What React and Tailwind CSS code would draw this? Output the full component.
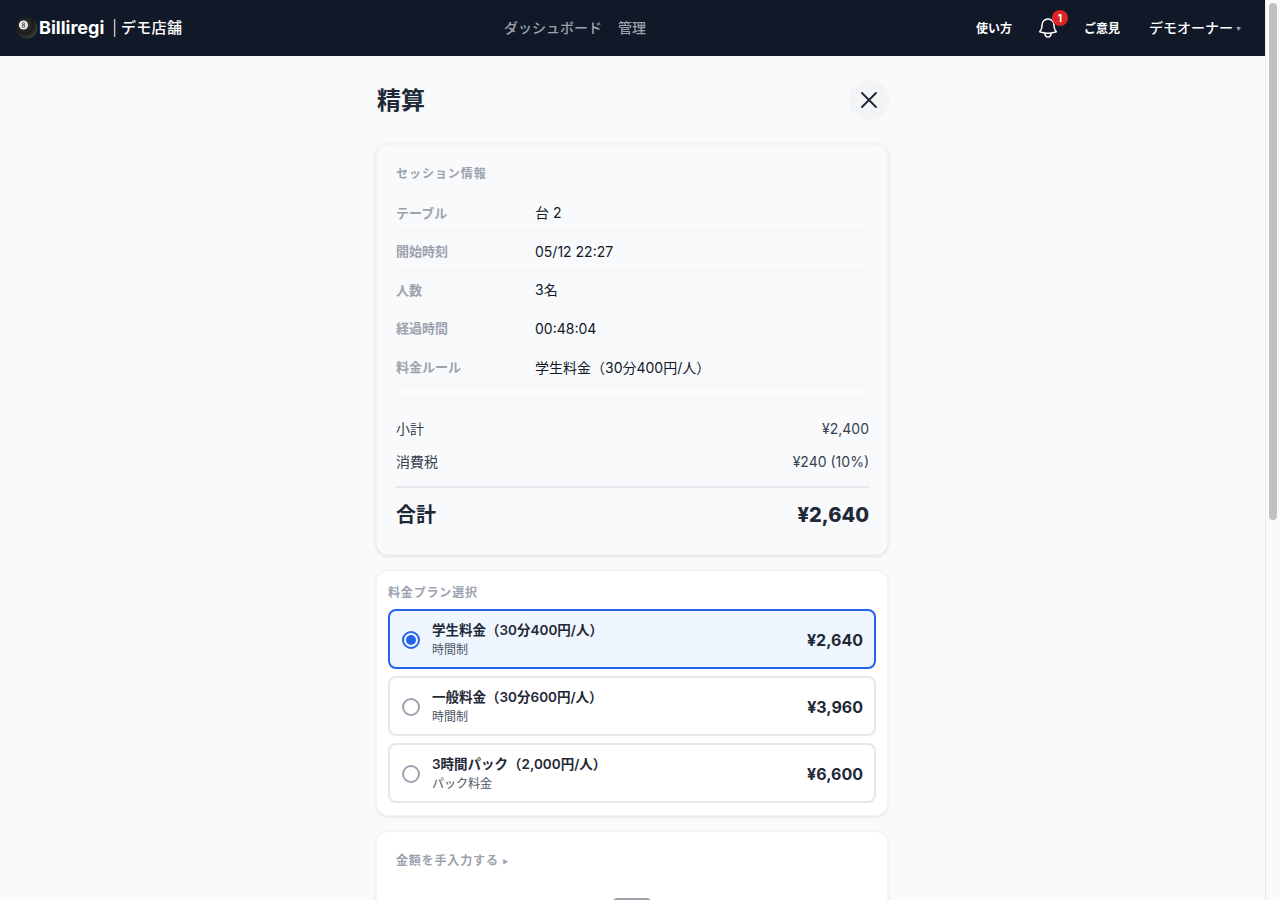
import React from "react";
import { X } from "lucide-react";
import { HiOutlineBell } from "react-icons/hi2";

const sessionRows = [
  ["テーブル", "台 2"],
  ["開始時刻", "05/12 22:27"],
  ["人数", "3名"],
  ["経過時間", "00:48:04"],
  ["料金ルール", "学生料金（30分400円/人）"],
];

const plans = [
  { name: "学生料金（30分400円/人）", type: "時間制", price: "¥2,640", selected: true },
  { name: "一般料金（30分600円/人）", type: "時間制", price: "¥3,960" },
  { name: "3時間パック（2,000円/人）", type: "パック料金", price: "¥6,600" },
];

function BallIcon() {
  return (
    <svg viewBox="0 0 22 22" className="w-[22px] h-[22px] shrink-0">
      <defs>
        <radialGradient id="ball" cx="40%" cy="35%" r="75%">
          <stop offset="0%" stopColor="#3a3a3a" />
          <stop offset="55%" stopColor="#1c1c1c" />
          <stop offset="100%" stopColor="#4a4a4a" />
        </radialGradient>
      </defs>
      <circle cx="11" cy="11" r="10.5" fill="url(#ball)" />
      <circle cx="7.5" cy="8" r="4.6" fill="#e8e8e8" />
      <circle cx="7.5" cy="6.7" r="1.1" fill="none" stroke="#333" strokeWidth="0.8" />
      <circle cx="7.5" cy="9.2" r="1.3" fill="none" stroke="#333" strokeWidth="0.8" />
    </svg>
  );
}

function Navbar() {
  return (
    <nav className="h-14 bg-[#111827] flex items-center pl-4 pr-[24px] text-white">
      <div className="flex items-center w-[488px]">
        <BallIcon />
        <span className="text-lg font-bold ml-[1px]">Billiregi</span>
        <span className="text-[15px] font-light ml-2 mr-[4px]">|</span>
        <span className="text-[15px] font-medium tracking-[0.02em]">デモ店舗</span>
      </div>
      <div className="flex-1 flex items-center gap-4 text-sm font-medium text-[#9ca3af]">
        <span>ダッシュボード</span>
        <span>管理</span>
      </div>
      <div className="flex items-center">
        <span className="text-xs font-bold mt-[2px]">使い方</span>
        <div className="relative mx-[24px] w-6 h-6 flex items-center justify-center">
          <HiOutlineBell className="w-6 h-6" />
          <span className="absolute -top-[6px] -right-[8px] w-4 h-4 rounded-full bg-[#dc2626] text-[10px] font-bold flex items-center justify-center">
            1
          </span>
        </div>
        <span className="text-xs font-bold mt-[2px]">ご意見</span>
        <span className="text-sm font-medium ml-[29px]">デモオーナー</span>
        <span className="text-[5px] text-[#9ca3af] ml-[3px] mt-1">▼</span>
      </div>
    </nav>
  );
}

function SessionCard() {
  return (
    <section className="bg-[#f9fafb] rounded-xl border border-[#f3f4f6] shadow-[0_1px_4px_rgba(0,0,0,0.12)] pl-[19px] pr-[18px] pt-5 pb-[19px]">
      <h2 className="text-xs font-bold text-[#9ca3af] tracking-[0.08em] leading-[18px] mb-[10.5px]">セッション情報</h2>
      {sessionRows.map(([label, value]) => (
        <div key={label} className="flex items-center h-[38.6px] pt-[2px] border-b border-[#f3f4f6]">
          <span className="w-[139px] text-[13px] font-bold text-[#9ca3af]">{label}</span>
          <span className="text-sm text-[#111827]">{value}</span>
        </div>
      ))}
      <div className="border-t border-[#f3f4f6] mt-3 pt-[13.5px]">
        <div className="flex justify-between items-center h-[33px] text-sm text-[#374151]">
          <span>小計</span>
          <span>¥2,400</span>
        </div>
        <div className="flex justify-between items-center h-[33px] text-sm text-[#374151]">
          <span>消費税</span>
          <span>¥240 (10%)</span>
        </div>
      </div>
      <div className="border-t-2 border-[#e5e7eb] mt-[7px] pt-[13px] flex justify-between items-center text-[#1f2937] font-bold text-xl leading-7 pb-[6px]">
        <span>合計</span>
        <span className="font-extrabold">¥2,640</span>
      </div>
    </section>
  );
}

function PlanOption({ plan }) {
  return (
    <div
      className={
        plan.selected
          ? "h-[60px] rounded-lg border-2 border-[#2563eb] bg-[#eff6ff] flex items-center pl-3 pr-[11px]"
          : "h-[60px] rounded-lg border-2 border-[#e5e7eb] bg-white flex items-center pl-3 pr-[11px]"
      }
    >
      {plan.selected ? (
        <span className="mt-[2px] w-[18px] h-[18px] rounded-full border-2 border-[#2563eb] flex items-center justify-center shrink-0">
          <span className="w-[10px] h-[10px] rounded-full bg-[#2563eb]" />
        </span>
      ) : (
        <span className="mt-[2px] w-[18px] h-[18px] rounded-full border-2 border-[#9ca3af] shrink-0" />
      )}
      <div className="ml-[12px] flex-1 pt-px">
        <div className="text-[13.5px] font-semibold text-[#1f2937] leading-5">{plan.name}</div>
        <div className="mt-px text-xs text-[#4b5563] leading-[18px]">{plan.type}</div>
      </div>
      <span className="mt-[2px] text-base font-bold text-[#1f2937]">{plan.price}</span>
    </div>
  );
}

function PlanCard() {
  return (
    <section className="bg-white rounded-xl border border-[#f3f4f6] shadow-[0_1px_3px_rgba(0,0,0,0.1)] px-[11px] pt-[13px] pb-3">
      <h2 className="text-xs font-bold text-[#9ca3af] tracking-[0.07em] leading-[18px] mb-[7px]">料金プラン選択</h2>
      <div className="flex flex-col gap-[7px]">
        {plans.map((plan) => (
          <PlanOption key={plan.name} plan={plan} />
        ))}
      </div>
    </section>
  );
}

export default function App() {
  return (
    <div className="h-screen overflow-hidden flex bg-[#f9fafb] font-['Inter','Noto_Sans_CJK_JP',sans-serif]">
      <div className="flex-1 min-w-0 overflow-y-auto [scrollbar-width:none]">
        <Navbar />
        <div className="pr-px">
          <main className="w-[512px] mx-auto pt-6 pb-[380px] flex flex-col">
            <div className="flex items-center justify-between h-10 mb-6 pl-px -mr-px">
              <h1 className="mt-[2px] text-2xl font-bold text-[#1f2937]">精算</h1>
              <button className="w-10 h-10 rounded-full bg-[#f3f4f6] flex items-center justify-center text-[#1f2937]">
                <X className="w-7 h-7" strokeWidth={1.6} />
              </button>
            </div>
            <SessionCard />
            <div className="h-[15px] shrink-0" />
            <PlanCard />
            <div className="h-[15px] shrink-0" />
            <section className="bg-white rounded-xl border border-[#f3f4f6] shadow-[0_1px_3px_rgba(0,0,0,0.1)] px-[19px] pt-5 h-[300px] flex flex-col items-center">
              <h2 className="self-start text-xs font-bold text-[#9ca3af] tracking-[0.07em] leading-4 mt-[1px]">
                金額を手入力する <span className="text-[6px] align-middle">▶</span>
              </h2>
              <div className="mt-[28px] w-[38px] h-10 rounded bg-[#9ca3af]" />
            </section>
          </main>
        </div>
      </div>
      <div className="w-[15px] shrink-0 bg-[#fafafa] border-l border-[#e8e8e8] pt-[3px] flex justify-center">
        <div className="w-[8px] h-[517px] rounded-full bg-[#c1c1c1]" />
      </div>
    </div>
  );
}
